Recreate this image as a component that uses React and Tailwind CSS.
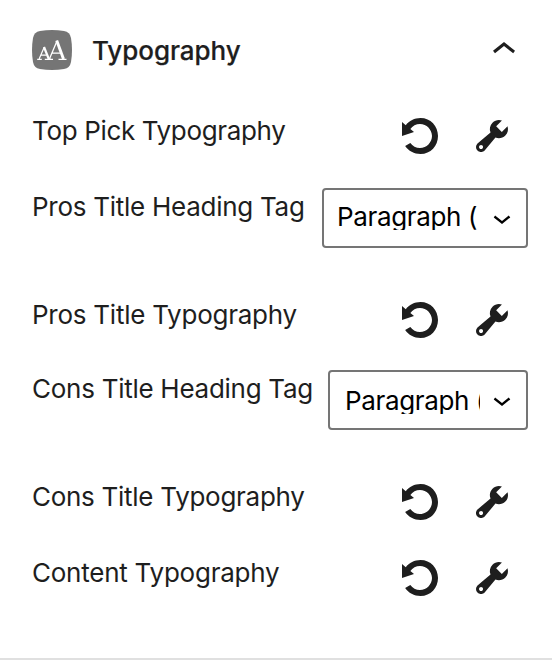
const ResetIcon = () => (
  <svg viewBox="0 0 20 20" className="size-10 shrink-0" fill="currentColor">
    <path d="M10.25 1.02c5.1 0 8.75 4.04 8.75 9s-3.65 9-8.75 9c-3.2 0-6.02-1.59-7.68-3.99l2.59-1.52c1.1 1.5 2.86 2.51 4.84 2.51 3.3 0 6-2.79 6-6s-2.7-6-6-6c-1.97 0-3.72 1-4.82 2.49L7 8.02l-6 2v-7L2.89 4.6c1.69-2.17 4.36-3.58 7.36-3.58z" />
  </svg>
);

const WrenchIcon = () => (
  <svg viewBox="0 0 20 20" className="size-10 shrink-0" fill="currentColor">
    <path d="M16.68 9.77c-1.34 1.34-3.3 1.67-4.95.99l-5.41 6.52c-.99.99-2.59.99-3.58 0s-.99-2.59 0-3.57l6.52-5.42c-.68-1.65-.35-3.61.99-4.95 1.28-1.28 3.12-1.62 4.72-1.06l-2.89 2.89 2.82 2.82 2.86-2.87c.53 1.58.18 3.39-1.08 4.65zM3.81 16.21c.4.39 1.04.39 1.43 0 .4-.4.4-1.04 0-1.43-.39-.4-1.03-.4-1.43 0-.39.39-.39 1.03 0 1.43z" />
  </svg>
);

const ChevronDown = () => (
  <svg viewBox="0 0 24 24" className="mt-[10px] size-9 shrink-0" fill="currentColor">
    <path d="M17.5 11.6L12 16l-5.5-4.4.9-1.2L12 14l4.5-3.6 1 1.2z" />
  </svg>
);

function TypographyRow({ label, tracking, height }) {
  return (
    <div className={`flex items-start justify-between pr-10 ${height}`}>
      <span className={`leading-8 ${tracking}`}>{label}</span>
      <div className="mt-px flex gap-8">
        <button type="button" aria-label="Reset"><ResetIcon /></button>
        <button type="button" aria-label="Edit"><WrenchIcon /></button>
      </div>
    </div>
  );
}

function HeadingTagRow({ label, tracking, height, box, text }) {
  return (
    <div className={`flex items-start justify-between pr-6 ${height}`}>
      <span className={`mt-[3px] leading-8 ${tracking}`}>{label}</span>
      <button
        type="button"
        className={`flex h-[60px] items-start justify-between rounded-[4px] border-2 border-[#757575] pr-[6px] text-left text-black ${box}`}
      >
        <span className={`overflow-hidden leading-[27px] ${text}`}>Paragraph (p)</span>
        <ChevronDown />
      </button>
    </div>
  );
}

export default function App() {
  return (
    <section className="flex h-[660px] w-[552px] flex-col overflow-hidden border-b-2 border-[#e0e0e0] bg-white pl-8 font-['Inter',sans-serif] text-[26px] whitespace-nowrap text-[#1e1e1e]">
      <header className="flex h-[115px] shrink-0 items-start pt-[26px] pr-6">
        <svg viewBox="0 0 40 40" className="mt-1 size-10 shrink-0">
          <path d="M8 1Q20-1 32 1Q38 2 39 8Q41 20 39 32Q38 38 32 39Q20 41 8 39Q2 38 1 32Q-1 20 1 8Q2 2 8 1Z" fill="#757575" />
          <g fill="none" stroke="#fff">
            <path d="M7.2 28.8L12.2 17.2M8.8 25.2H14.6M5.2 29.3H9.8M12.8 29.3H19" strokeWidth="1.2" />
            <path d="M12 17L16.8 29" strokeWidth="2.2" />
            <path d="M17.5 28.8L25 11M19.8 23.2H28.5M15.8 29.3H21M26.5 29.3H34.5" strokeWidth="1.3" />
            <path d="M24.7 10.5L31.5 29" strokeWidth="2.9" />
          </g>
        </svg>
        <h2 className="mt-[9px] ml-[20px] flex-1 leading-8 font-medium tracking-[-0.05px] [-webkit-text-stroke:0.2px_#1e1e1e]">Typography</h2>
        <svg viewBox="0 0 24 24" className="size-12 shrink-0" fill="currentColor">
          <path d="M6.5 12.4L12 8l5.5 4.4-.9 1.2L12 10l-4.5 3.6-1-1.2z" />
        </svg>
      </header>

      <TypographyRow label="Top Pick Typography" height="h-[73px]" tracking="tracking-[-0.35px]" />
      <HeadingTagRow
        label="Pros Title Heading Tag"
        height="h-[111px]"
        tracking="tracking-[-0.27px]"
        box="w-[206px] pl-[13px]"
        text="mt-[13px] w-[141px] tracking-[-0.35px]"
      />
      <TypographyRow label="Pros Title Typography" height="h-[71px]" tracking="tracking-[-0.25px]" />
      <HeadingTagRow
        label="Cons Title Heading Tag"
        height="h-[111px]"
        tracking="tracking-[-0.27px]"
        box="w-[200px] pl-[15px]"
        text="mt-[15px] w-[135px] tracking-[-0.35px]"
      />
      <TypographyRow label="Cons Title Typography" height="h-[76px]" tracking="tracking-[-0.28px]" />
      <TypographyRow label="Content Typography" height="h-[76px]" tracking="tracking-[-0.24px]" />
    </section>
  );
}
